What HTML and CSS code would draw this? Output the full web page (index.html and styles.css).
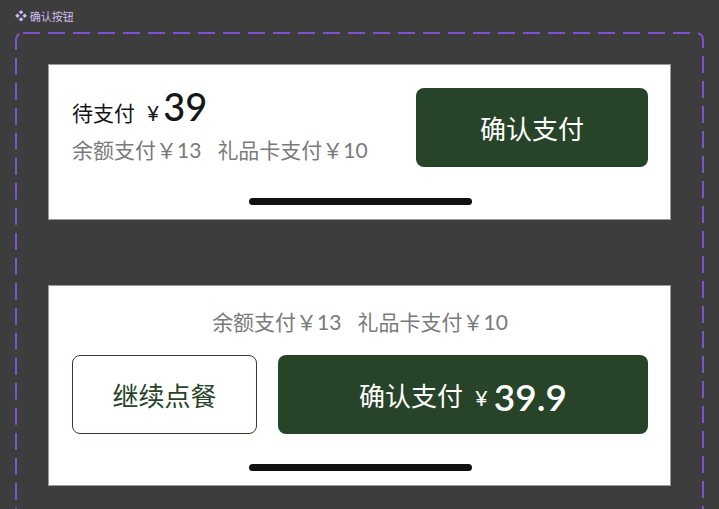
FILE: index.html
```html
<!DOCTYPE html>
<html>
<head>
    <title>确认按钮</title>
    <link rel="stylesheet" href="styles.css">
</head>
<body>
    <div class="frame-label"><span class="frame-icon">❖</span> 确认按钮</div>

    <div class="frame">
        <svg class="frame-border" xmlns="http://www.w3.org/2000/svg"><rect></rect></svg>

        <div class="card">
            <div class="pay-row">
                <div class="pay-info">
                    <div class="due">
                        <span class="due-label">待支付</span>
                        <span class="yen">¥</span><span class="amount">39</span>
                    </div>
                    <div class="detail">余额支付￥13<span class="sep"></span>礼品卡支付￥10</div>
                </div>
                <button class="btn btn-primary btn-pay">确认支付</button>
            </div>
            <div class="home-bar"></div>
        </div>

        <div class="card card-split">
            <div class="detail center">余额支付￥13<span class="sep"></span>礼品卡支付￥10</div>
            <div class="btn-row">
                <button class="btn btn-outline">继续点餐</button>
                <button class="btn btn-primary btn-grow">
                    <span>确认支付</span>
                    <span class="yen yen-light">¥</span><span class="amount amount-light">39.9</span>
                </button>
            </div>
            <div class="home-bar"></div>
        </div>
    </div>
</body>
</html>
```

FILE: styles.css
```css
body {
    margin: 0;
    padding: 10px 0 0 15px;
    background-color: #3d3d3d;
    font-family: Lato, "Noto Sans CJK SC", sans-serif;
    overflow: hidden;
}

.frame-label {
    height: 14px;
    line-height: 14px;
    font-size: 11px;
    color: #cdbdf0;
    margin-bottom: 8px;
}

.frame-icon {
    font-size: 12px;
}

/* dashed frame drawn with svg so the dash length matches */
.frame {
    position: relative;
    width: 623px;
    padding: 32px 33px 40px 33px;
}

.frame-border {
    position: absolute;
    top: 0;
    left: 0;
    width: 100%;
    height: 100%;
    overflow: visible;
}

.frame-border rect {
    x: 1px;
    y: 1px;
    width: calc(100% - 2px);
    height: calc(100% - 2px);
    rx: 7px;
    fill: none;
    stroke: #7f52d0;
    stroke-width: 2px;
    stroke-dasharray: 17 8;
}

.card {
    position: relative;
    background-color: #fff;
    border: 1px solid #9a9a9a;
    padding: 23px 22px 14px 23px;
}

.card + .card {
    margin-top: 65px;
}

.pay-row {
    display: flex;
    align-items: center;
    justify-content: space-between;
}

.pay-info {
    display: flex;
    flex-direction: column;
    align-self: flex-start;
}

.due {
    display: flex;
    align-items: baseline;
    height: 36px;
    line-height: 36px;
    color: #161616;
}

.due-label {
    font-size: 21px;
    margin-right: 12px;
}

.yen {
    font-size: 21px;
    margin-right: 4px;
}

.amount {
    font-size: 38px;
    font-weight: 500;
}

.detail {
    font-size: 21px;
    line-height: 28px;
    color: #7a7a7a;
}

.pay-info .detail {
    margin-top: 12px;
}

.detail .sep {
    display: inline-block;
    width: 16px;
}

.center {
    text-align: center;
}

.btn {
    height: 79px;
    border-radius: 8px;
    font-family: Lato, "Noto Sans CJK SC", sans-serif;
    font-size: 26px;
    cursor: pointer;
}

.btn-primary {
    background-color: #274428;
    border: none;
    color: #fff;
}

.btn-pay {
    width: 232px;
}

.btn-outline {
    width: 185px;
    background-color: #fff;
    border: 1.5px solid #274428;
    color: #274428;
}

.btn-row {
    display: flex;
    gap: 21px;
    margin-top: 19px;
}

.btn-grow {
    flex: 1;
    display: flex;
    align-items: center;
    justify-content: center;
}

.yen-light {
    margin-left: 12px;
    margin-right: 6px;
    margin-top: 6px;
    font-size: 22px;
}

.amount-light {
    font-size: 37px;
    font-weight: 600;
    margin-top: 4px;
}

.home-bar {
    width: 223px;
    height: 7px;
    border-radius: 4px;
    background-color: #111;
    margin: 31px auto 0 auto;
}

.card-split {
    padding-top: 22px;
}

.card-split .home-bar {
    margin-top: 30px;
}
```
